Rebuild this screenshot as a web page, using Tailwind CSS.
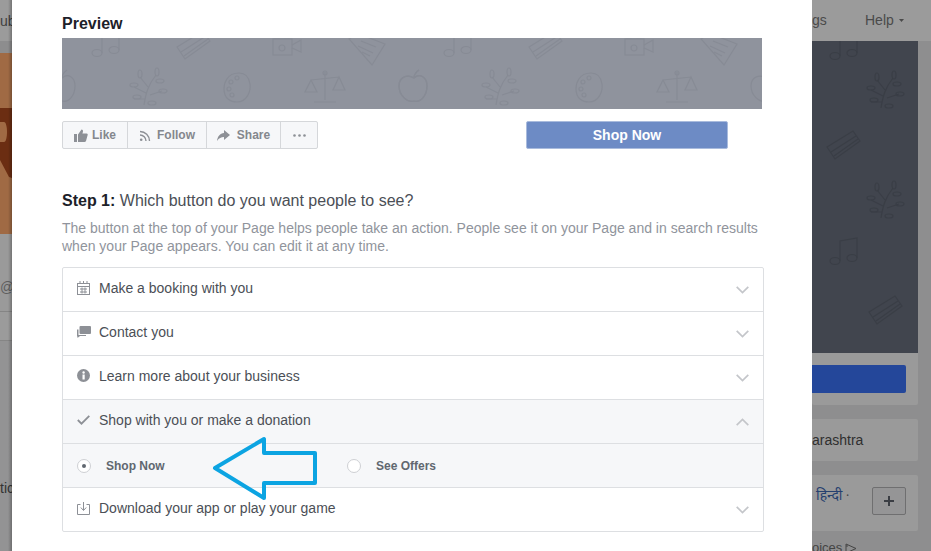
<!DOCTYPE html>
<html lang="en">
<head>
<meta charset="utf-8">
<title>Preview</title>
<script src="https://cdn.jsdelivr.net/npm/@tailwindcss/browser@4"></script>
</head>
<body class="m-0 overflow-hidden bg-[#8e8e8f] font-['Liberation_Sans',Arial,sans-serif]">
<svg width="0" height="0" class="absolute">
  <defs>
    <g id="note" fill="none" stroke-width="1.2"><ellipse cx="-8" cy="6" rx="5" ry="3.5"/><ellipse cx="9" cy="3" rx="5" ry="3.5"/><path d="M-3 6 V-14 L14 -17 V3"/></g>
    <g id="pencil" fill="none" stroke-width="1.2"><path d="M-16 2 L10 -14 L17 -4 L-8 14 Z"/><path d="M-12 7 L13 -9 M-9 11 L15 -6"/></g>
    <g id="camera" fill="none" stroke-width="1.2"><rect x="-9" y="-8" width="19" height="16"/><circle cx="-5" cy="-13" r="4"/><circle cx="5" cy="-13" r="4"/><path d="M10 -2 L19 -7 V5 L10 1"/><circle cx="0" cy="1" r="3"/></g>
    <g id="book" fill="none" stroke-width="1.2"><path d="M-18 -8 L-5 -16 L0 -10 L18 -3 L5 18 L-18 -8 Z"/><path d="M-6 -6 L9 0 M-9 -1 L6 6 M-5 5 L3 9"/></g>
    <g id="tree" fill="none" stroke-width="1.2"><path d="M-4 18 C-2 6 0 -2 8 -12 M-2 6 L-14 0 M0 0 L-8 -10 M2 8 L14 4 M-14 12 L-3 12"/><ellipse cx="-14" cy="-2" rx="4" ry="2"/><ellipse cx="-8" cy="-13" rx="2" ry="4"/><ellipse cx="9" cy="-15" rx="2" ry="4"/><ellipse cx="15" cy="4" rx="4" ry="2"/><ellipse cx="-11" cy="10" rx="4" ry="2"/><ellipse cx="12" cy="-6" rx="4" ry="2"/><ellipse cx="4" cy="16" rx="4" ry="2"/></g>
    <g id="palette" fill="none" stroke-width="1.2"><path d="M2 -14 C-10 -14 -13 -4 -13 2 C-13 12 -6 15 0 15 C10 15 14 4 13 -3 C12 -10 8 -14 2 -14 Z"/><circle cx="-6" cy="-5" r="2"/><circle cx="0" cy="-9" r="2"/><circle cx="-8" cy="2" r="2"/><circle cx="-5" cy="8" r="2"/></g>
    <g id="scale" fill="none" stroke-width="1.2"><path d="M0 -15 V13 M-11 15 H11 M-14 -7 L14 -10 M-14 -7 L-20 5 H-8 Z M14 -10 L8 3 H20 Z"/><circle cx="0" cy="-14" r="2"/></g>
    <g id="apple" fill="none" stroke-width="1.2"><path d="M2 -9 C8 -14 15 -10 15 -1 C15 8 9 16 2 14 C-5 16 -13 8 -13 -1 C-13 -10 -5 -13 2 -9 Z M2 -9 C2 -12 4 -15 7 -17"/></g>
    <g id="tile">
      <use href="#note" x="43" y="9"/><use href="#pencil" x="131" y="7"/><use href="#camera" x="220" y="9"/><use href="#book" x="305" y="9"/>
      <use href="#tree" x="86" y="49"/><use href="#palette" x="175" y="49"/><use href="#scale" x="263" y="49"/><use href="#apple" x="350" y="49"/><use href="#apple" x="-2" y="49"/>
    </g>
  </defs>
</svg>
<div class="flex h-[551px] w-[931px] overflow-hidden">

  <!-- dimmed page, left side -->
  <div class="relative flex w-[12px] shrink-0 flex-col overflow-hidden bg-[#8f8f90] text-sm text-[#3f3f3f]">
    <div class="flex h-[41px] shrink-0 items-center whitespace-nowrap bg-[#9b9b9b]">ube</div>
    <div class="h-[12px] shrink-0 bg-[#8d8d8e]"></div>
    <div class="h-[181px] shrink-0 bg-[#a06a44]">
      <svg width="12" height="181" viewBox="0 0 12 181" class="block"><path d="M0 55 H12 V125 L9 124 L0 107 V89 H4 C8 89 8 69 4 69 H0 Z" fill="#6b2d12"/></svg>
    </div>
    <div class="flex h-[77px] shrink-0 items-end whitespace-nowrap bg-[#9a9a9a] pb-[14px] text-[#5e5e5e]">@u</div>
    <div class="h-[30px] shrink-0 border-t border-b border-[#858585] bg-[#9b9b9b]"></div>
    <div class="flex flex-1 items-start whitespace-nowrap bg-[#939394] pt-[137px] text-[#333]">tic</div>
    <div class="absolute inset-y-0 right-0 w-[4px] bg-gradient-to-r from-transparent to-black/25"></div>
  </div>

  <!-- modal -->
  <div class="flex w-[800px] shrink-0 flex-col bg-white pl-[50px]">
    <div class="mt-[15px] h-[18px] text-base leading-[18px] font-bold text-[#1d2129]">Preview</div>

    <div class="relative mt-[5px] h-[71px] w-[700px] shrink-0 overflow-hidden bg-[#8f939d]">
      <svg width="700" height="71" class="block">
        <g stroke="#878b95"><use href="#tile" x="0"/><use href="#tile" x="352"/></g>
      </svg>
    </div>

    <div class="mt-[12px] flex h-[28px] w-[700px] shrink-0 items-stretch justify-between">
      <div class="flex rounded-[2px] border border-[#d5d7da] bg-[#f6f7f9] text-xs font-bold text-[#84878d]">
        <div class="flex w-[65px] items-center justify-center gap-[4px] border-r border-[#d5d7da]">
          <svg width="14" height="13" viewBox="0 0 14 13" fill="#8d9096"><rect x="0" y="5" width="3" height="8"/><path d="M4 5.5 L7.5 0.5 C8.8 0.5 9.3 1.6 8.9 3 L8.4 4.5 H12.6 C13.8 4.5 14 5.8 13.5 6.5 L12 12 C11.7 12.7 11.2 13 10.5 13 H4 Z"/></svg>
          <span>Like</span>
        </div>
        <div class="flex w-[79px] items-center justify-center gap-[5px] border-r border-[#d5d7da]">
          <svg width="13" height="13" viewBox="0 0 13 13" fill="none" stroke="#8d9096" stroke-width="1.4"><circle cx="2.2" cy="10.8" r="1.3" fill="#8d9096" stroke="none"/><path d="M1 6 A6 6 0 0 1 7 12"/><path d="M1 2.5 A9.5 9.5 0 0 1 10.5 12"/></svg>
          <span>Follow</span>
        </div>
        <div class="flex w-[74px] items-center justify-center gap-[7px] border-r border-[#d5d7da]">
          <svg width="13" height="11" viewBox="0 0 13 11" fill="#8d9096"><path d="M7 0 L13 5 L7 10 V7 C4 7 2 8 0 11 C0.5 6.5 3 3.5 7 3 Z"/></svg>
          <span>Share</span>
        </div>
        <div class="flex w-[36px] items-center justify-center">
          <svg width="13" height="3" viewBox="0 0 13 3" fill="#8d9096"><circle cx="1.5" cy="1.5" r="1.3"/><circle cx="6.5" cy="1.5" r="1.3"/><circle cx="11.5" cy="1.5" r="1.3"/></svg>
        </div>
      </div>
      <div class="mr-[34px] flex w-[202px] items-center justify-center rounded-[2px] border border-[#a9bbdd] bg-[#6d8bc5] text-sm font-bold text-white">Shop Now</div>
    </div>

    <div class="mt-[42px] h-[20px] text-base leading-[20px] text-[#4b4f56]"><span class="font-bold text-[#1d2129]">Step 1:</span> Which button do you want people to see?</div>

    <div class="mt-[8px] w-[700px] text-sm leading-[18px] text-[#90949c]">The button at the top of your Page helps people take an action. People see it on your Page and in search results<br>when your Page appears. You can edit it at any time.</div>

    <div class="mt-[12px] flex w-[702px] flex-col rounded-[2px] border border-[#dddfe2] text-sm text-[#4b4f56]">
      <div class="flex h-[44px] items-center border-b border-[#dddfe2] px-[14px] pb-[4px]">
        <svg width="13" height="14" viewBox="0 0 13 14" fill="none" stroke="#8d9096"><rect x="0.5" y="2.5" width="12" height="11"/><path d="M3 0 V3 M6.500 0 V3 M10 0 V3 M0.500 5.500 H12.500 M3 8 H10 M3 11 H10 M5 6.500 V12.500 M8 6.500 V12.500"/></svg>
        <span class="ml-[9px] flex-1">Make a booking with you</span>
        <svg width="13" height="8" viewBox="0 0 13 8" fill="none" stroke="#c4c6ca" stroke-width="1.7" class="mt-[4px]"><path d="M0.700 0.800 L6.500 6.600 L12.300 0.800"/></svg>
      </div>
      <div class="flex h-[44px] items-center border-b border-[#dddfe2] px-[14px] pb-[4px]">
        <svg width="14" height="12" viewBox="0 0 14 12" fill="#8d9096"><rect x="2.500" y="0" width="11.500" height="8" rx="1"/><path d="M0 3.500 H1.500 V9 H9 V10 H3 L0.500 12 V10.500 H0 Z"/></svg>
        <span class="ml-[8px] flex-1">Contact you</span>
        <svg width="13" height="8" viewBox="0 0 13 8" fill="none" stroke="#c4c6ca" stroke-width="1.7" class="mt-[4px]"><path d="M0.700 0.800 L6.500 6.600 L12.300 0.800"/></svg>
      </div>
      <div class="flex h-[44px] items-center border-b border-[#dddfe2] px-[14px] pb-[4px]">
        <svg width="13" height="13" viewBox="0 0 13 13"><circle cx="6.500" cy="6.500" r="6.500" fill="#8d9096"/><rect x="5.500" y="5.500" width="2.200" height="5" fill="#fff"/><circle cx="6.600" cy="3.500" r="1.200" fill="#fff"/></svg>
        <span class="ml-[9px] flex-1">Learn more about your business</span>
        <svg width="13" height="8" viewBox="0 0 13 8" fill="none" stroke="#c4c6ca" stroke-width="1.7" class="mt-[4px]"><path d="M0.700 0.800 L6.500 6.600 L12.300 0.800"/></svg>
      </div>
      <div class="flex h-[44px] items-center border-b border-[#dddfe2] bg-[#f6f7f9] px-[14px] pb-[4px]">
        <svg width="13" height="10" viewBox="0 0 13 10" fill="none" stroke="#8d9096" stroke-width="1.800"><path d="M0.800 5 L4.500 8.700 L12.300 0.800"/></svg>
        <span class="ml-[9px] flex-1">Shop with you or make a donation</span>
        <svg width="13" height="8" viewBox="0 0 13 8" fill="none" stroke="#c4c6ca" stroke-width="1.700" class="mt-[4px]"><path d="M0.700 7.200 L6.500 1.400 L12.300 7.200"/></svg>
      </div>
      <div class="flex h-[44px] items-center border-b border-[#dddfe2] bg-[#f6f7f9] pl-[14px] text-xs font-bold text-[#606770]">
        <div class="flex h-[14px] w-[14px] items-center justify-center rounded-full border border-[#ced0d4] bg-white"><div class="h-[4px] w-[4px] rounded-full bg-[#606770]"></div></div>
        <span class="ml-[15px] w-[241px]">Shop Now</span>
        <div class="h-[14px] w-[14px] rounded-full border border-[#ced0d4] bg-white"></div>
        <span class="ml-[15px]">See Offers</span>
      </div>
      <div class="flex h-[43px] items-center px-[14px] pb-[3px]">
        <svg width="13" height="13" viewBox="0 0 13 13" fill="none" stroke="#8d9096"><path d="M3.500 2.500 H0.500 V12.500 H12.500 V2.500 H9.500"/><path d="M6.500 0 V8 M3.800 5.500 L6.500 8.500 L9.200 5.500"/></svg>
        <span class="ml-[9px] flex-1">Download your app or play your game</span>
        <svg width="13" height="8" viewBox="0 0 13 8" fill="none" stroke="#c4c6ca" stroke-width="1.700" class="mt-[4px]"><path d="M0.700 0.800 L6.500 6.600 L12.300 0.800"/></svg>
      </div>
    </div>
  </div>

  <!-- dimmed page, right side -->
  <div class="flex w-[119px] shrink-0 flex-col overflow-hidden bg-[#8e8e8f] text-sm text-[#3a3a3a]">
    <div class="flex h-[41px] shrink-0 items-center bg-[#9b9b9b] pb-[1px] text-[#4a4a4a]">
      <span class="w-[53px]">gs</span>
      <span>Help</span>
      <svg width="5" height="3" viewBox="0 0 5 3" fill="#4a4a4a" class="ml-[5px]"><path d="M0 0 H5 L2.500 3 Z"/></svg>
    </div>
    <div class="h-[312px] w-[106px] shrink-0 overflow-hidden bg-[#41454e]">
      <svg width="106" height="312" class="block">
        <g stroke="#3a3e46">
          <use href="#note" x="31" y="9"/><use href="#tree" x="73" y="49"/><use href="#pencil" x="31" y="104"/><use href="#tree" x="73" y="159"/><use href="#note" x="31" y="214"/><use href="#pencil" x="73" y="269"/>
        </g>
      </svg>
    </div>
    <div class="h-[52px] w-[106px] shrink-0 rounded-b-[2px] bg-[#9a9a9a] pt-[12px]">
      <div class="h-[28px] w-[94px] rounded-r-[2px] bg-[#24479a]"></div>
    </div>
    <div class="mt-[14px] flex h-[42px] w-[106px] shrink-0 items-center rounded-r-[2px] bg-[#9a9a9a] text-[#2f2f2f]">arashtra</div>
    <div class="mt-[14px] flex h-[56px] w-[106px] shrink-0 items-start rounded-r-[2px] bg-[#9a9a9a] pt-[12px] pl-[4px] text-[#25406f]">
      <span class="mt-[-2px] w-[56px] font-['Noto_Sans','DejaVu_Sans',sans-serif]">हिन्दी <span class="text-xs text-[#444]">·</span></span>
      <div class="flex h-[28px] w-[34px] items-center justify-center rounded-[2px] border border-[#6f6f70] bg-[#959596]">
        <svg width="10" height="10" viewBox="0 0 10 10" fill="#3b3e44"><rect x="4" y="0" width="2" height="10"/><rect x="0" y="4" width="10" height="2"/></svg>
      </div>
    </div>
    <div class="mt-[8px] flex items-center text-[13px] whitespace-nowrap text-[#444]">oices
      <svg width="12" height="11" viewBox="0 0 12 11" fill="none" stroke="#444" class="ml-[3px]"><path d="M1 1 L11 5.500 L1 10 Z M1 3 H3"/></svg>
    </div>
  </div>
</div>

<!-- annotation arrow drawn over the screenshot -->
<svg width="120" height="70" viewBox="0 0 120 70" class="absolute left-[205px] top-[434px]" fill="none" stroke="#0ca4e2" stroke-width="4" stroke-linejoin="round">
  <path d="M10 34 L59 5 V19 H110 V49 H59 V64 Z"/>
</svg>
</body>
</html>
